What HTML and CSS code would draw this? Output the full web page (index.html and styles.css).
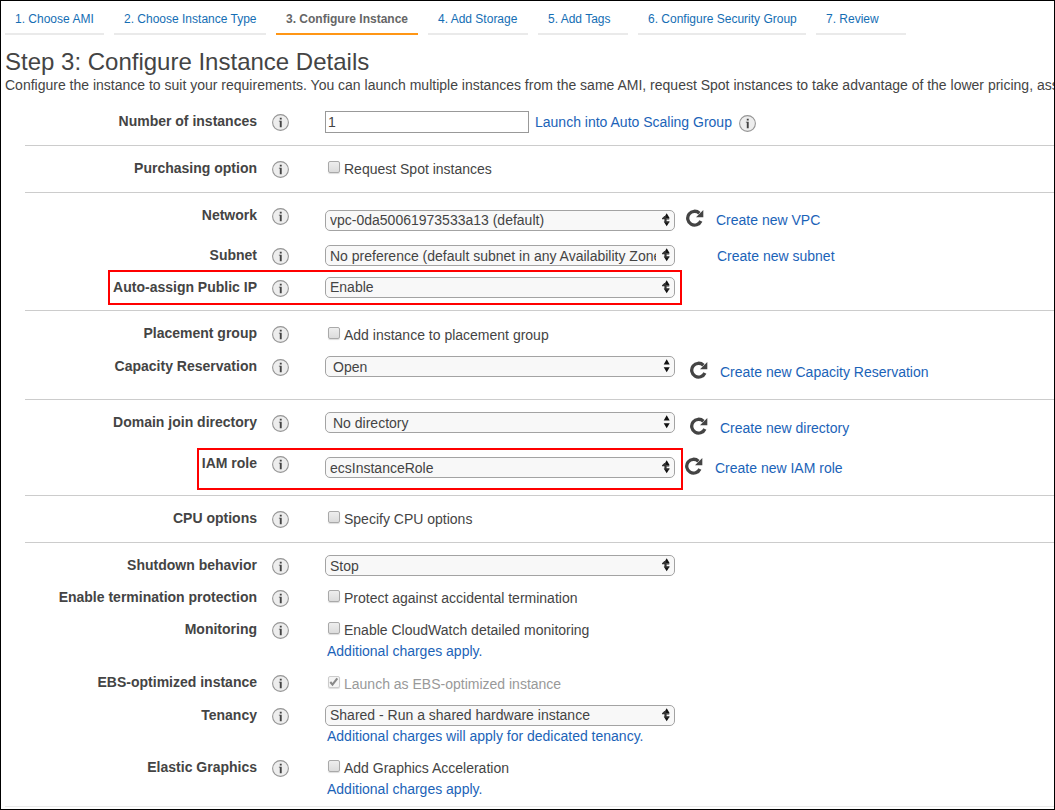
FILE: index.html
```
<!DOCTYPE html>
<html lang="en">
<head>
<meta charset="utf-8">
<title>Step 3: Configure Instance Details</title>
<link rel="stylesheet" href="styles.css">
</head>
<body>
<svg class="defs" width="0" height="0">
  <symbol id="info" viewBox="0 0 17 17">
    <circle cx="8.5" cy="8.5" r="7.9" fill="#ededed" stroke="#969696" stroke-width="1.1"/>
    <path d="M7.8 3.8h1.9v1.8H7.8zM6.9 6.7h2.8v6.5H7.8V7.6h-.9z" fill="#444"/>
  </symbol>
  <symbol id="refresh" viewBox="0 0 18 18">
    <path d="M13.4 4.2A6.9 6.9 0 1 0 14.9 12" fill="none" stroke="#444" stroke-width="3.3"/>
    <path d="M17.3 1v7.2H10z" fill="#444"/>
  </symbol>
  <symbol id="arrows" viewBox="0 0 8 14">
    <path d="M4.7 .3L7.7 5.5H1.7zM4.7 13.2L7.7 8.2H1.7z" fill="#111"/>
  </symbol>
  <symbol id="arrows-dense" viewBox="0 0 8 14">
    <path d="M4.7 .3L7.7 5.3H1.7zM4.7 13.2L7.7 8.4H1.7z" fill="#111"/>
    <path d="M0 5.2L2.4 3h1.8v2.3h3v1.2H4.6v1.9h2.6v1.3H3.4L2.4 8.4V6.2H0z" fill="#333"/>
  </symbol>
</svg>
<div class="page">
  <nav class="tabs">
    <a class="tab t1">1. Choose AMI</a>
    <a class="tab t2">2. Choose Instance Type</a>
    <a class="tab t3 active">3. Configure Instance</a>
    <a class="tab t4">4. Add Storage</a>
    <a class="tab t5">5. Add Tags</a>
    <a class="tab t6">6. Configure Security Group</a>
    <a class="tab t7">7. Review</a>
  </nav>
  <header class="intro">
    <h1>Step 3: Configure Instance Details</h1>
    <p>Configure the instance to suit your requirements. You can launch multiple instances from the same AMI, request Spot instances to take advantage of the lower pricing, ass</p>
  </header>
  <main>
    <section>
      <div class="row count"><label>Number of instances</label><svg class="info"><use href="#info"/></svg>
        <div class="control"><input class="number" type="text" value="1"><a class="link">Launch into Auto Scaling Group</a><svg class="info"><use href="#info"/></svg></div></div>
    </section>
    <section>
      <div class="row single"><label>Purchasing option</label><svg class="info"><use href="#info"/></svg>
        <div class="control"><span class="check"></span><span class="text">Request Spot instances</span></div></div>
    </section>
    <section>
      <div class="row network"><label>Network</label><svg class="info"><use href="#info"/></svg>
        <div class="control"><div class="select raised"><span>vpc-0da50061973533a13 (default)</span><svg><use href="#arrows-dense"/></svg></div><svg class="refresh"><use href="#refresh"/></svg><a class="link">Create new VPC</a></div></div>
      <div class="row subnet"><label>Subnet</label><svg class="info"><use href="#info"/></svg>
        <div class="control"><div class="select"><span>No preference (default subnet in any Availability Zone)</span><svg><use href="#arrows-dense"/></svg></div><a class="link">Create new subnet</a></div></div>
      <div class="row public-ip"><label>Auto-assign Public IP</label><svg class="info"><use href="#info"/></svg>
        <div class="control"><div class="select raised"><span>Enable</span><svg><use href="#arrows-dense"/></svg></div></div><div class="highlight"></div></div>
    </section>
    <section>
      <div class="row placement"><label>Placement group</label><svg class="info"><use href="#info"/></svg>
        <div class="control"><span class="check"></span><span class="text">Add instance to placement group</span></div></div>
      <div class="row capacity"><label>Capacity Reservation</label><svg class="info"><use href="#info"/></svg>
        <div class="control"><div class="select inset"><span>Open</span><svg><use href="#arrows"/></svg></div><svg class="refresh"><use href="#refresh"/></svg><a class="link">Create new Capacity Reservation</a></div></div>
    </section>
    <section>
      <div class="row directory"><label>Domain join directory</label><svg class="info"><use href="#info"/></svg>
        <div class="control"><div class="select inset"><span>No directory</span><svg><use href="#arrows"/></svg></div><svg class="refresh"><use href="#refresh"/></svg><a class="link">Create new directory</a></div></div>
      <div class="row iam"><label>IAM role</label><svg class="info"><use href="#info"/></svg>
        <div class="control"><div class="select"><span>ecsInstanceRole</span><svg><use href="#arrows-dense"/></svg></div><svg class="refresh"><use href="#refresh"/></svg><a class="link">Create new IAM role</a></div><div class="highlight"></div></div>
    </section>
    <section>
      <div class="row single"><label>CPU options</label><svg class="info"><use href="#info"/></svg>
        <div class="control"><span class="check"></span><span class="text">Specify CPU options</span></div></div>
    </section>
    <section class="last">
      <div class="row shutdown"><label>Shutdown behavior</label><svg class="info"><use href="#info"/></svg>
        <div class="control"><div class="select"><span>Stop</span><svg><use href="#arrows-dense"/></svg></div></div></div>
      <div class="row termination"><label>Enable termination protection</label><svg class="info"><use href="#info"/></svg>
        <div class="control"><span class="check"></span><span class="text">Protect against accidental termination</span></div></div>
      <div class="row monitoring"><label>Monitoring</label><svg class="info"><use href="#info"/></svg>
        <div class="control"><span class="check"></span><span class="text">Enable CloudWatch detailed monitoring</span><a class="note">Additional charges apply.</a></div></div>
      <div class="row ebs"><label>EBS-optimized instance</label><svg class="info"><use href="#info"/></svg>
        <div class="control disabled"><span class="check"><svg viewBox="0 0 12 12"><path d="M2.3 6l2.2 2.6L9.3 2.4" fill="none" stroke="#888" stroke-width="2.1"/></svg></span><span class="text">Launch as EBS-optimized instance</span></div></div>
      <div class="row tenancy"><label>Tenancy</label><svg class="info"><use href="#info"/></svg>
        <div class="control"><div class="select raised"><span>Shared - Run a shared hardware instance</span><svg><use href="#arrows-dense"/></svg></div><a class="note">Additional charges will apply for dedicated tenancy.</a></div></div>
      <div class="row graphics"><label>Elastic Graphics</label><svg class="info"><use href="#info"/></svg>
        <div class="control"><span class="check"></span><span class="text">Add Graphics Acceleration</span><a class="note">Additional charges apply.</a></div></div>
    </section>
  </main>
</div>
</body>
</html>
```
FILE: styles.css
```
* { box-sizing: border-box; }
body {
  margin: 0;
  font: 14px/20px "Liberation Sans", Arial, sans-serif;
  color: #444;
  background: #fff;
}
.defs { position: absolute; }
.page {
  width: 1055px;
  height: 810px;
  border: 1px solid #000;
  overflow: hidden;
}
.tabs { display: flex; gap: 10px; padding-left: 4px; }
.tab {
  height: 34px;
  padding: 8px 0 0 10px;
  border-bottom: 2px solid #eaeaea;
  color: #146eb4;
  font-size: 12px;
  white-space: nowrap;
}
.tab.active { color: #666; font-weight: bold; border-color: #ff9615; }
.t1 { width: 99px; }
.t2 { width: 152px; }
.t3 { width: 142px; }
.t4 { width: 100px; }
.t5 { width: 90px; }
.t6 { width: 168px; }
.t7 { width: 90px; }
.intro { height: 64px; padding: 13px 0 0 4px; }
h1 { margin: 0; font-size: 24px; line-height: 27px; font-weight: normal; }
p { margin: 0; white-space: nowrap; }
main { padding-left: 24px; }
section { padding-top: 12px; border-bottom: 1px solid #ccc; }
section.last { margin-left: -20px; padding-left: 20px; border-color: #eaeaea; }
.row {
  display: grid;
  grid-template-columns: 232px 17px 1fr;
  align-items: start;
  position: relative;
}
label { text-align: right; font-weight: bold; white-space: nowrap; }
.info { width: 17px; height: 17px; margin-top: 3px; }
.row > .info { margin-left: 15px; }
.control {
  display: flex;
  flex-wrap: wrap;
  align-items: flex-start;
  padding-left: 51px;
}
.link, .note { color: #1b63b8; white-space: nowrap; }
.note { width: 100%; padding-left: 2px; }
.number {
  width: 204px;
  height: 22px;
  padding: 1px 2px;
  border: 1px solid #999;
  font: inherit;
  color: #444;
}
.count .link { margin: 1px 7px 0 6px; }
.count .control .info { margin-top: 4px; }
.select {
  display: flex;
  justify-content: space-between;
  width: 350px;
  height: 21px;
  padding: 0 4px;
  border: 1px solid #a3a3a3;
  border-radius: 5px;
  background: #f8f8f8;
}
.select.inset { padding-left: 7px; }
.select span { width: 326px; overflow: hidden; white-space: nowrap; }
.select.raised span { line-height: 18px; }
.select svg { width: 8px; height: 14px; margin-top: 2px; flex: none; }
.refresh { width: 18px; height: 18px; }
.check {
  width: 12px;
  height: 12px;
  margin: 3px 4px 0 3px;
  border: 1px solid #a9a9a9;
  border-radius: 2px;
  background: linear-gradient(#eee, #dcdcdc);
  box-shadow: 0 1px 1px #ddd;
}
.check svg { display: block; width: 12px; height: 12px; margin: -1px; }
.text { margin-top: 1px; }
.text + .note { margin-top: 1px; }
.disabled .text { color: #999; }
.disabled .check { border-color: #ccc; background: #f4f4f4; }
.highlight { position: absolute; border: 2px solid #f00; }

.count, .single { height: 34px; }
.network { height: 40px; }
.network .control { padding-top: 5px; }
.network .refresh { margin: -1px 0 0 11px; }
.network .link { margin-left: 12px; }
.subnet { height: 32px; }
.subnet .link { margin: 1px 0 0 42px; }
.public-ip { height: 33px; }
.public-ip .highlight { left: 83px; top: -7px; width: 574px; height: 35px; }
.placement { height: 33px; }
.placement .check { margin-top: 4px; }
.placement .text { margin-top: 2px; }
.capacity { height: 43px; }
.directory { height: 41px; }
.capacity .refresh, .directory .refresh { margin: 5px 0 0 15px; }
.capacity .link, .directory .link { margin: 6px 0 0 12px; }
.iam { height: 42px; }
.iam .control { padding-top: 4px; }
.iam .refresh { margin-left: 10px; }
.iam .link { margin: 1px 0 0 12px; }
.iam .highlight { left: 172px; top: -5px; width: 486px; height: 42px; }
.shutdown, .termination { height: 32px; }
.monitoring { height: 53px; }
.ebs { height: 33px; }
.ebs .check { margin-top: 4px; }
.ebs .text { margin-top: 2px; }
.tenancy { height: 52px; }
.graphics { height: 49px; }
```
